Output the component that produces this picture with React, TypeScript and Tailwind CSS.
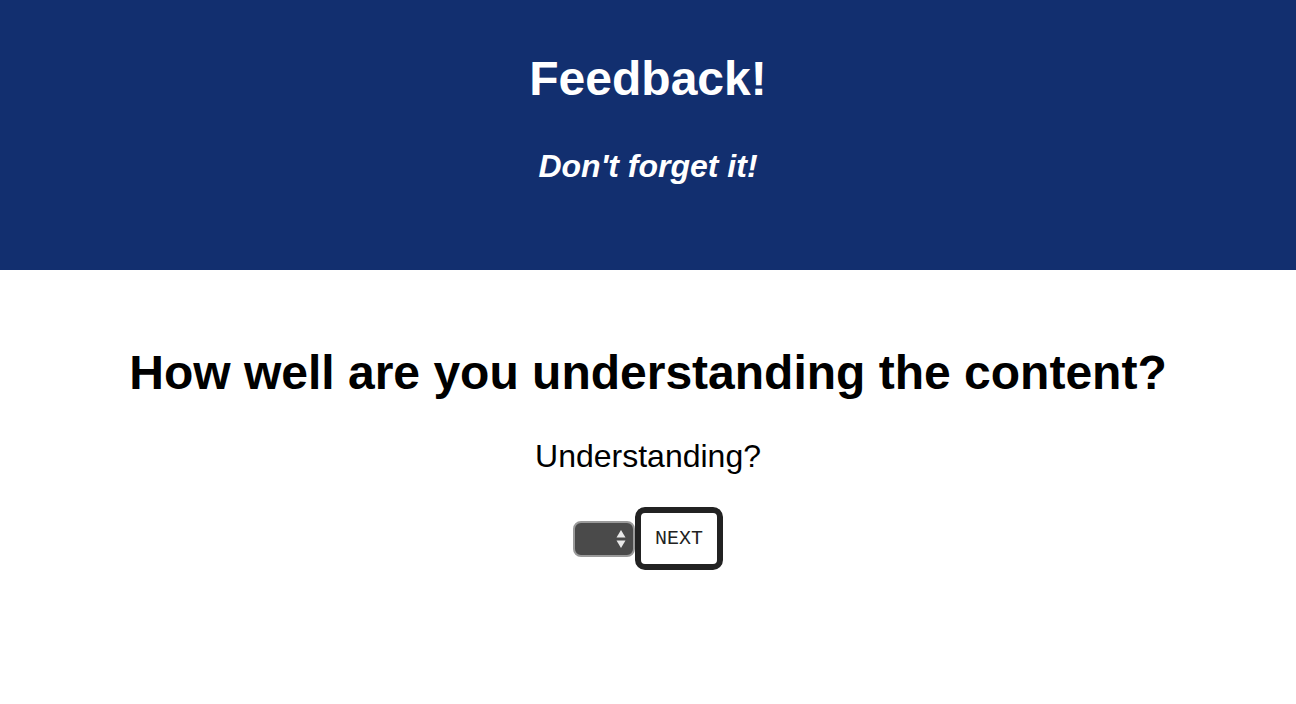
import React, { useState } from 'react';

export default function App() {
  const [level, setLevel] = useState('');

  return (
    <div className="min-h-screen bg-white font-[Liberation_Sans,Arial,sans-serif] text-black">
      {/* Header */}
      <header className="h-[270px] bg-[#122f6f] text-white text-center pt-[51px]">
        <h1 className="text-[48px] leading-[55px] font-bold">Feedback!</h1>
        <p className="mt-[42px] text-[32px] leading-[37px] font-bold italic">Don't forget it!</p>
      </header>

      {/* Question */}
      <main className="text-center pt-[75px]">
        <h2 className="text-[48px] leading-[55px] font-bold">How well are you understanding the content?</h2>
        <p className="mt-[38px] text-[32px] leading-[37px]">Understanding?</p>

        <div className="mt-[32px] flex items-center justify-center">
          <div className="relative w-[62px] h-[36px]">
            <select
              value={level}
              onChange={(e) => setLevel(e.target.value)}
              className="appearance-none w-full h-full bg-[#4a4a4a] border-2 border-[#9a9a9a] rounded-[8px] text-white text-sm px-2"
            >
              <option value=""></option>
              <option value="1">1</option>
              <option value="2">2</option>
              <option value="3">3</option>
              <option value="4">4</option>
              <option value="5">5</option>
            </select>
            <svg
              className="absolute right-[9px] top-[8px] pointer-events-none"
              width="10"
              height="20"
              viewBox="0 0 10 20"
            >
              <path d="M5 1 L9.5 8.5 L0.5 8.5 Z" fill="#e8e8e8" />
              <path d="M0.5 11.5 L9.5 11.5 L5 19 Z" fill="#e8e8e8" />
            </svg>
          </div>
          <button className="w-[88px] h-[63px] bg-white border-[6px] border-[#222222] rounded-[10px] font-[Liberation_Mono,Courier_New,monospace] text-[20px] leading-none text-[#222]">
            NEXT
          </button>
        </div>
      </main>
    </div>
  );
}
